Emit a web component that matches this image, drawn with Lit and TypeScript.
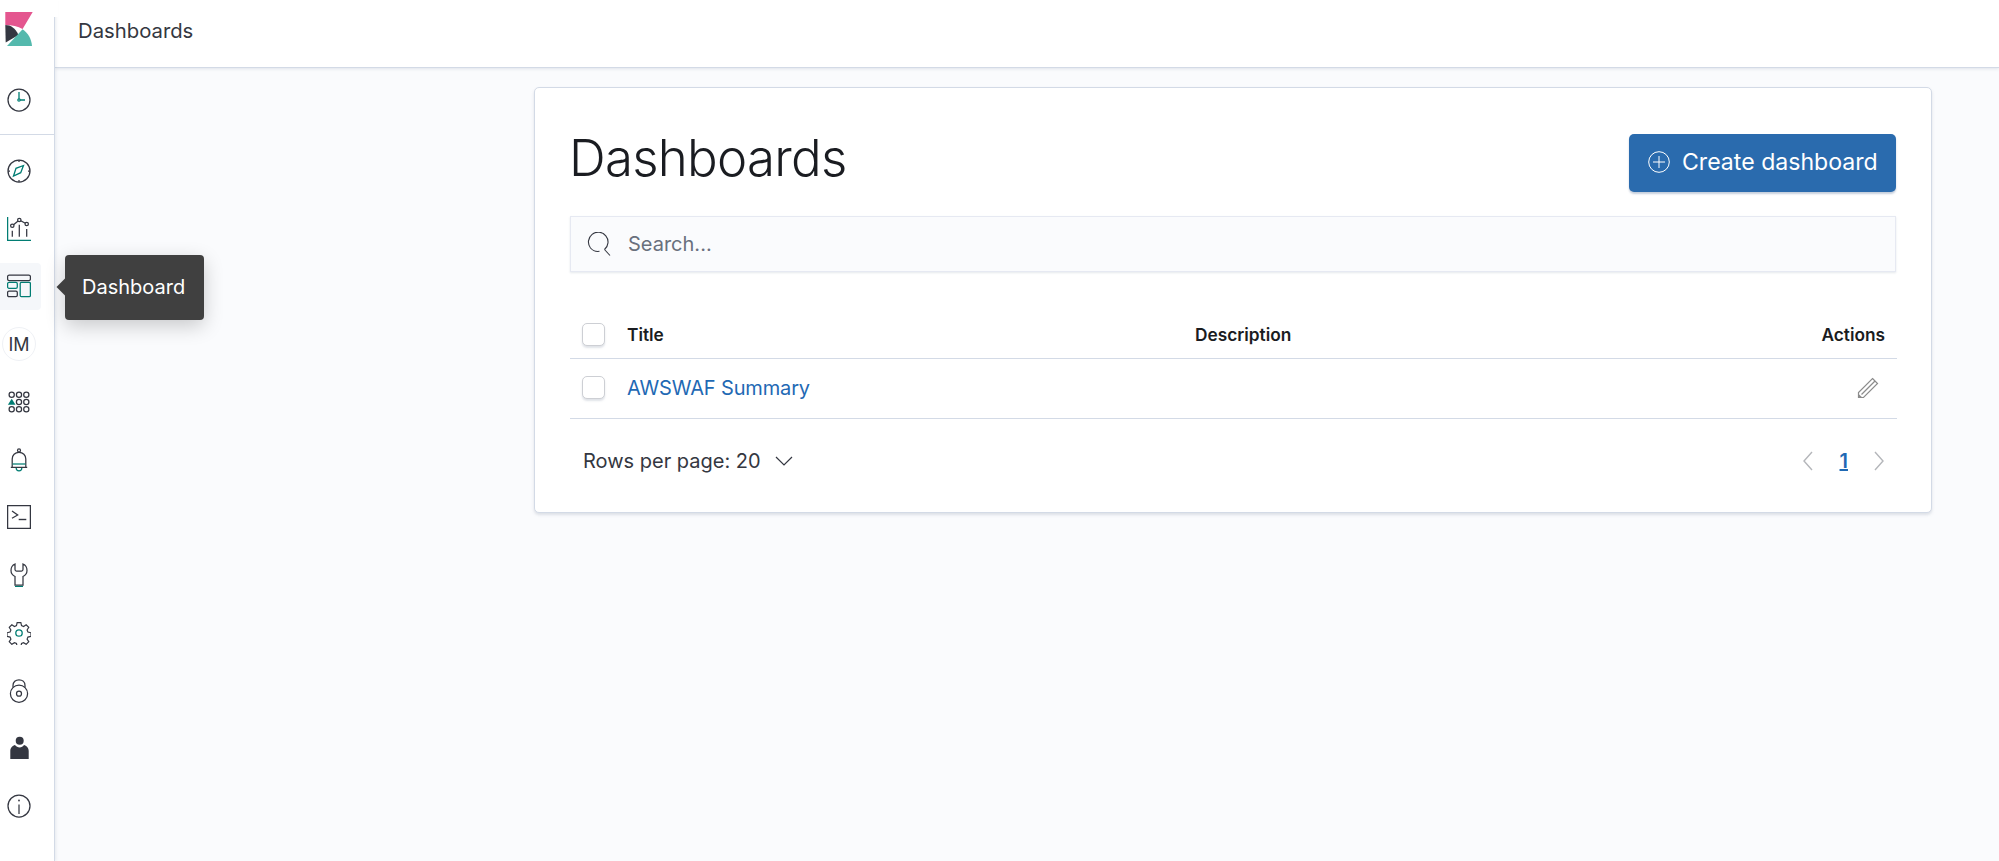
import { LitElement, html, css, svg } from "lit";
import { customElement } from "lit/decorators.js";

const D = "#343741";
const G = "#017d73";

const icon = (body: unknown, size = 24) => html`<svg width=${size} height=${size} viewBox="0 0 24 24" fill="none" stroke=${D} stroke-width="1.25">${body}</svg>`;

const icons = {
  clock: svg`<circle cx="12" cy="12" r="11"/><path d="M12 4v8h6" stroke=${G} stroke-width="1.3"/><circle cx="12" cy="12" r="1.2" fill="#fff" stroke=${G}/>`,
  compass: svg`<circle cx="12" cy="12" r="11"/><path d="M12 1v2M12 21v2M1 12h2M21 12h2"/><path d="M16.5 6.500 13.700 13.700 6.500 17 9 9.300z" stroke=${G} stroke-width="1.300"/>`,
  chart: svg`<path d="M.6 0v23.400H24" stroke=${G} stroke-width="1.300"/><path d="M5.300 8.700 12.300 3l7.400 4"/><circle cx="5.300" cy="8.700" r="1.700" fill="#fff"/><circle cx="12.300" cy="3" r="1.700" fill="#fff"/><circle cx="19.700" cy="7" r="1.700" fill="#fff"/><path d="M5.300 13.700v6M12.300 7.700v12M19.700 12v7.700"/>`,
  dash: svg`<rect x=".6" y="1" width="22.800" height="5.700" rx="1.600"/><rect x=".6" y="8.300" width="9.700" height="6" rx="1.400" stroke=${G}/><rect x=".6" y="17" width="9.700" height="5.700" rx="1.400"/><rect x="13.200" y="8.300" width="10.200" height="14.400" rx="1.200" stroke=${G}/>`,
  ml: svg`<circle cx="4.700" cy="4.700" r="2.600"/><circle cx="12" cy="4.700" r="2.600"/><circle cx="19.300" cy="4.700" r="2.600"/><path d="M4.700 8.700l3.800 6H.9z" fill=${G} stroke="none"/><circle cx="12" cy="12" r="2.600"/><circle cx="19.300" cy="12" r="2.600"/><circle cx="4.700" cy="19.300" r="2.600"/><circle cx="12" cy="19.300" r="2.600"/><circle cx="19.300" cy="19.300" r="2.600"/>`,
  bell: svg`<path d="M5.200 19V11c0-3.800 2.800-6.600 6.800-6.600s6.800 2.800 6.800 6.600v8M3.800 19.300h16.400"/><circle cx="12" cy="2.400" r="1.500"/><path d="M5.500 16h13" stroke=${G}/><path d="M9.200 20c0 1.800 1.300 2.800 2.800 2.800s2.800-1 2.800-2.800" stroke=${G}/>`,
  term: svg`<rect x=".6" y=".6" width="22.800" height="22.800" stroke-width="1.300"/><path d="M5 6l5.700 4-5.700 3.300"/><path d="M11.700 14.500h7.600" stroke-width="1.400"/>`,
  wrench: svg`<path d="M8 1C5.500 2 4 4.800 4 7.500c0 3 2 5 4 6V22h8v-8.500c2-1 4-3 4-6C20 4.800 18.500 2 16 1v5.500c0 1-.7 1.500-1.500 1.500h-5C8.700 8 8 7.500 8 6.500z"/><path d="M8 23.600h8" stroke=${G} stroke-width="1.400"/>`,
  gear: svg`<path d="M10 .8h4l.7 3.300 2.200.9 2.800-1.800 2.800 2.800-1.800 2.800.9 2.200 3.300.7v4l-3.300.7-.9 2.200 1.800 2.800-2.800 2.800-2.800-1.800-2.200.9-.7 3.300h-4l-.7-3.300-2.200-.9-2.800 1.800-2.800-2.800 1.800-2.800-.9-2.200-3.300-.7v-4l3.300-.7.9-2.200-1.800-2.800 2.800-2.800 2.800 1.800 2.200-.9z" transform="translate(.84 .84) scale(.93)"/><circle cx="12" cy="12" r="3.200" stroke=${G} stroke-width="1.300"/>`,
  lock: svg`<circle cx="12" cy="14.700" r="8.600"/><path d="M6 8.200V6.500C6 3 8.700.8 12 .8s6 2.200 6 5.700v1.700"/><circle cx="12" cy="14.700" r="2.500"/>`,
  person: svg`<circle cx="12.700" cy="4.700" r="4" fill=${D} stroke="none"/><path d="M3.300 23V15c0-3.500 2.500-5.500 4.700-6 1 1.500 3 2.400 4.700 2.400s3.300-.9 4.300-2.400c2.200.5 4.700 2.500 4.700 6v8z" fill=${D} stroke="none"/>`,
  info: svg`<circle cx="12" cy="12" r="11"/><path d="M12 10.500V20"/><circle cx="12" cy="6.500" r=".9" fill=${D} stroke="none"/>`,
};

const K = html`<svg class="logo" width="28" height="35" viewBox="0 0 28 35">
  <path d="M.3 0h27.400L17.600 17C13 14.500 7 13 .3 13z" fill="#e4568f"/>
  <path d="M.3 13c5.500 0 10 3 13.200 10L.7 30.500z" fill="#343741"/>
  <path d="M2 34 17.600 17.300C23 21 26.500 27 27 34z" fill="#54b9ad"/>
</svg>`;

@customElement("app-root")
export class AppRoot extends LitElement {
  static styles = css`
    :host { display: block; font-family: Inter, "Liberation Sans", sans-serif; color: #1a1c21; }
    * { box-sizing: border-box; }
    .page { display: grid; grid-template-columns: 55px 1fr; height: 861px; background: #fafbfd; overflow: hidden; }
    .side { background: #fff; border-right: 1px solid #d3dae6; box-shadow: 1px 0 3px rgba(152,162,179,.2); display: flex; flex-direction: column; position: relative; z-index: 1; }
    .side::before { content: ""; position: absolute; top: 0; right: -4px; width: 5px; height: 17px; background: #fff; }
    .brand { height: 66px; display: flex; align-items: flex-start; padding: 12px 0 0 5px; }
    .recent { height: 69px; display: flex; align-items: center; padding-left: 7px; border-bottom: 1px solid #d3dae6; }
    .nav { display: flex; flex-direction: column; padding-top: 7px; }
    .item { height: 57.750px; display: flex; align-items: center; padding-left: 7px; position: relative; flex: none; }
    .item.active::before { content: ""; position: absolute; left: 0; top: 5px; width: 41px; height: 47px; background: #f5f7fa; border-radius: 0 4px 4px 0; }
    .item svg, .item .av { position: relative; }
    .av { width: 34px; height: 34px; margin-left: -5px; border: 1px solid #eff1f5; border-radius: 50%; display: flex; align-items: center; justify-content: center; font-size: 18px; color: #343741; font-weight: 400; }
    .tip { position: absolute; left: 65px; top: -3px; width: 139px; height: 65px; background: #404040; color: #fff; border-radius: 4px; display: flex; align-items: center; padding-left: 17px; font-size: 20px; box-shadow: 0 6px 20px rgba(0,0,0,.2); z-index: 3; white-space: nowrap; }
    .tip::before { content: ""; position: absolute; left: -6px; top: 26px; width: 12px; height: 12px; background: #404040; transform: rotate(45deg); }
    .main { display: flex; flex-direction: column; min-width: 0; }
    .top { height: 68px; background: #fff; border-bottom: 1px solid #d3dae6; box-shadow: 0 1px 3px rgba(152,162,179,.25); display: flex; align-items: center; padding: 0 0 6px 23px; font-size: 20.300px; color: #343741; flex: none; }
    .content { padding: 19px 67px 0 479px; }
    .card { height: 426px; background: #fff; border: 1px solid #d3dae6; border-radius: 5px; box-shadow: 0 2px 3px rgba(152,162,179,.3); padding: 46px 35px 0; }
    .head { display: flex; justify-content: space-between; align-items: center; height: 58px; }
    h1 { margin: 0 0 10px -1px; font-size: 51px; line-height: 48px; font-weight: 300; color: #1a1c21; letter-spacing: -.75px; }
    .btn { width: 267px; height: 58px; background: #2a6bae; border-radius: 5px; color: #fff; display: flex; align-items: center; gap: 12px; padding: 0 0 2px 19px; font-size: 23.100px; box-shadow: 0 2px 2px rgba(65,95,140,.3); }
    .search { margin-top: 24px; height: 56px; background: #fafbfd; border: 1px solid #e6e9f2; box-shadow: 0 1px 2px rgba(152,162,179,.25); display: flex; align-items: center; padding-left: 16px; gap: 17px; font-size: 20px; color: #69707d; }
    .row { display: grid; grid-template-columns: 45px 568px 1fr auto; align-items: center; padding: 0 12px; margin-right: -1px; border-bottom: 1px solid #d3dae6; }
    .row.hd { height: 61px; margin-top: 26px; font-size: 17.300px; font-weight: 600; color: #1a1c21; padding-top: 12px; }
    .row.bd { height: 60px; font-size: 20px; padding-bottom: 2px; }
    a { color: #1f69b4; text-decoration: none; letter-spacing: -.15px; }
    .cb { width: 23px; height: 23px; background: #fff; border: 1px solid #cdcfd4; border-radius: 5px; box-shadow: 0 2px 2px rgba(152,162,179,.3); }
    .foot { display: flex; justify-content: space-between; align-items: center; height: 83px; padding: 0 11px 0 13px; font-size: 20px; color: #343741; }
    .rows { display: flex; align-items: center; gap: 13px; }
    .pager { display: flex; align-items: center; }
    .pg { color: #1f69b4; font-weight: 600; text-decoration: underline; font-size: 20px; margin: 0 25px 0 26px; }
    .pencil { display: block; margin-right: 6px; }
  `;

  render() {
    const nav: [keyof typeof icons | "im", boolean][] = [
      ["compass", false], ["chart", false], ["dash", true], ["im", false], ["ml", false], ["bell", false], ["term", false],
      ["wrench", false], ["gear", false], ["lock", false], ["person", false], ["info", false],
    ];
    return html`<div class="page">
      <aside class="side">
        <div class="brand">${K}</div>
        <div class="recent">${icon(icons.clock)}</div>
        <nav class="nav">
          ${nav.map(([n, active]) => html`<div class="item ${active ? "active" : ""}">
            ${n === "im" ? html`<span class="av">IM</span>` : icon(icons[n as keyof typeof icons])}
            ${active ? html`<div class="tip">Dashboard</div>` : ""}
          </div>`)}
        </nav>
      </aside>
      <div class="main">
        <header class="top">Dashboards</header>
        <main class="content">
          <section class="card">
            <div class="head">
              <h1>Dashboards</h1>
              <div class="btn">
                <svg width="22" height="22" viewBox="0 0 22 22" fill="none" stroke="#fff" stroke-width="1"><circle cx="11" cy="11" r="10.300"/><path d="M11 5v12M5 11h12"/></svg>
                Create dashboard
              </div>
            </div>
            <div class="search">
              <svg width="24" height="24" viewBox="0 0 24 24" fill="none" stroke="#343741" stroke-width="1.100"><path d="M17.500 17.500A9.800 9.800 0 1 0 3.500 16 9.800 9.800 0 0 0 12.500 19.300"/><path d="M17.500 17.500 23 23.500"/></svg>
              <span>Search...</span>
            </div>
            <div class="row hd"><span class="cb"></span><span>Title</span><span>Description</span><span>Actions</span></div>
            <div class="row bd"><span class="cb"></span><a>AWSWAF Summary</a><span></span>
              <svg class="pencil" width="22" height="22" viewBox="0 0 22 22" fill="none" stroke="#8c8c8c" stroke-width="1.200"><path d="M15.500 1.500 20.500 6.500 6.500 20.500H1.500V15.500z"/><path d="M4.500 17.500 18 4"/><path d="M1 16.500V21h5z" fill="#8c8c8c" stroke="none"/></svg>
            </div>
            <div class="foot">
              <div class="rows"><span>Rows per page: 20</span>
                <svg width="20" height="12" viewBox="0 0 20 12" fill="none" stroke="#343741" stroke-width="1.200"><path d="M2 2l8 8 8-8"/></svg>
              </div>
              <div class="pager">
                <svg width="12" height="20" viewBox="0 0 12 20" fill="none" stroke="#b4b6ba" stroke-width="1.400"><path d="M10 1 2 10l8 9"/></svg>
                <span class="pg">1</span>
                <svg width="12" height="20" viewBox="0 0 12 20" fill="none" stroke="#b4b6ba" stroke-width="1.400"><path d="M2 1l8 9-8 9"/></svg>
              </div>
            </div>
          </section>
        </main>
      </div>
    </div>`;
  }
}
